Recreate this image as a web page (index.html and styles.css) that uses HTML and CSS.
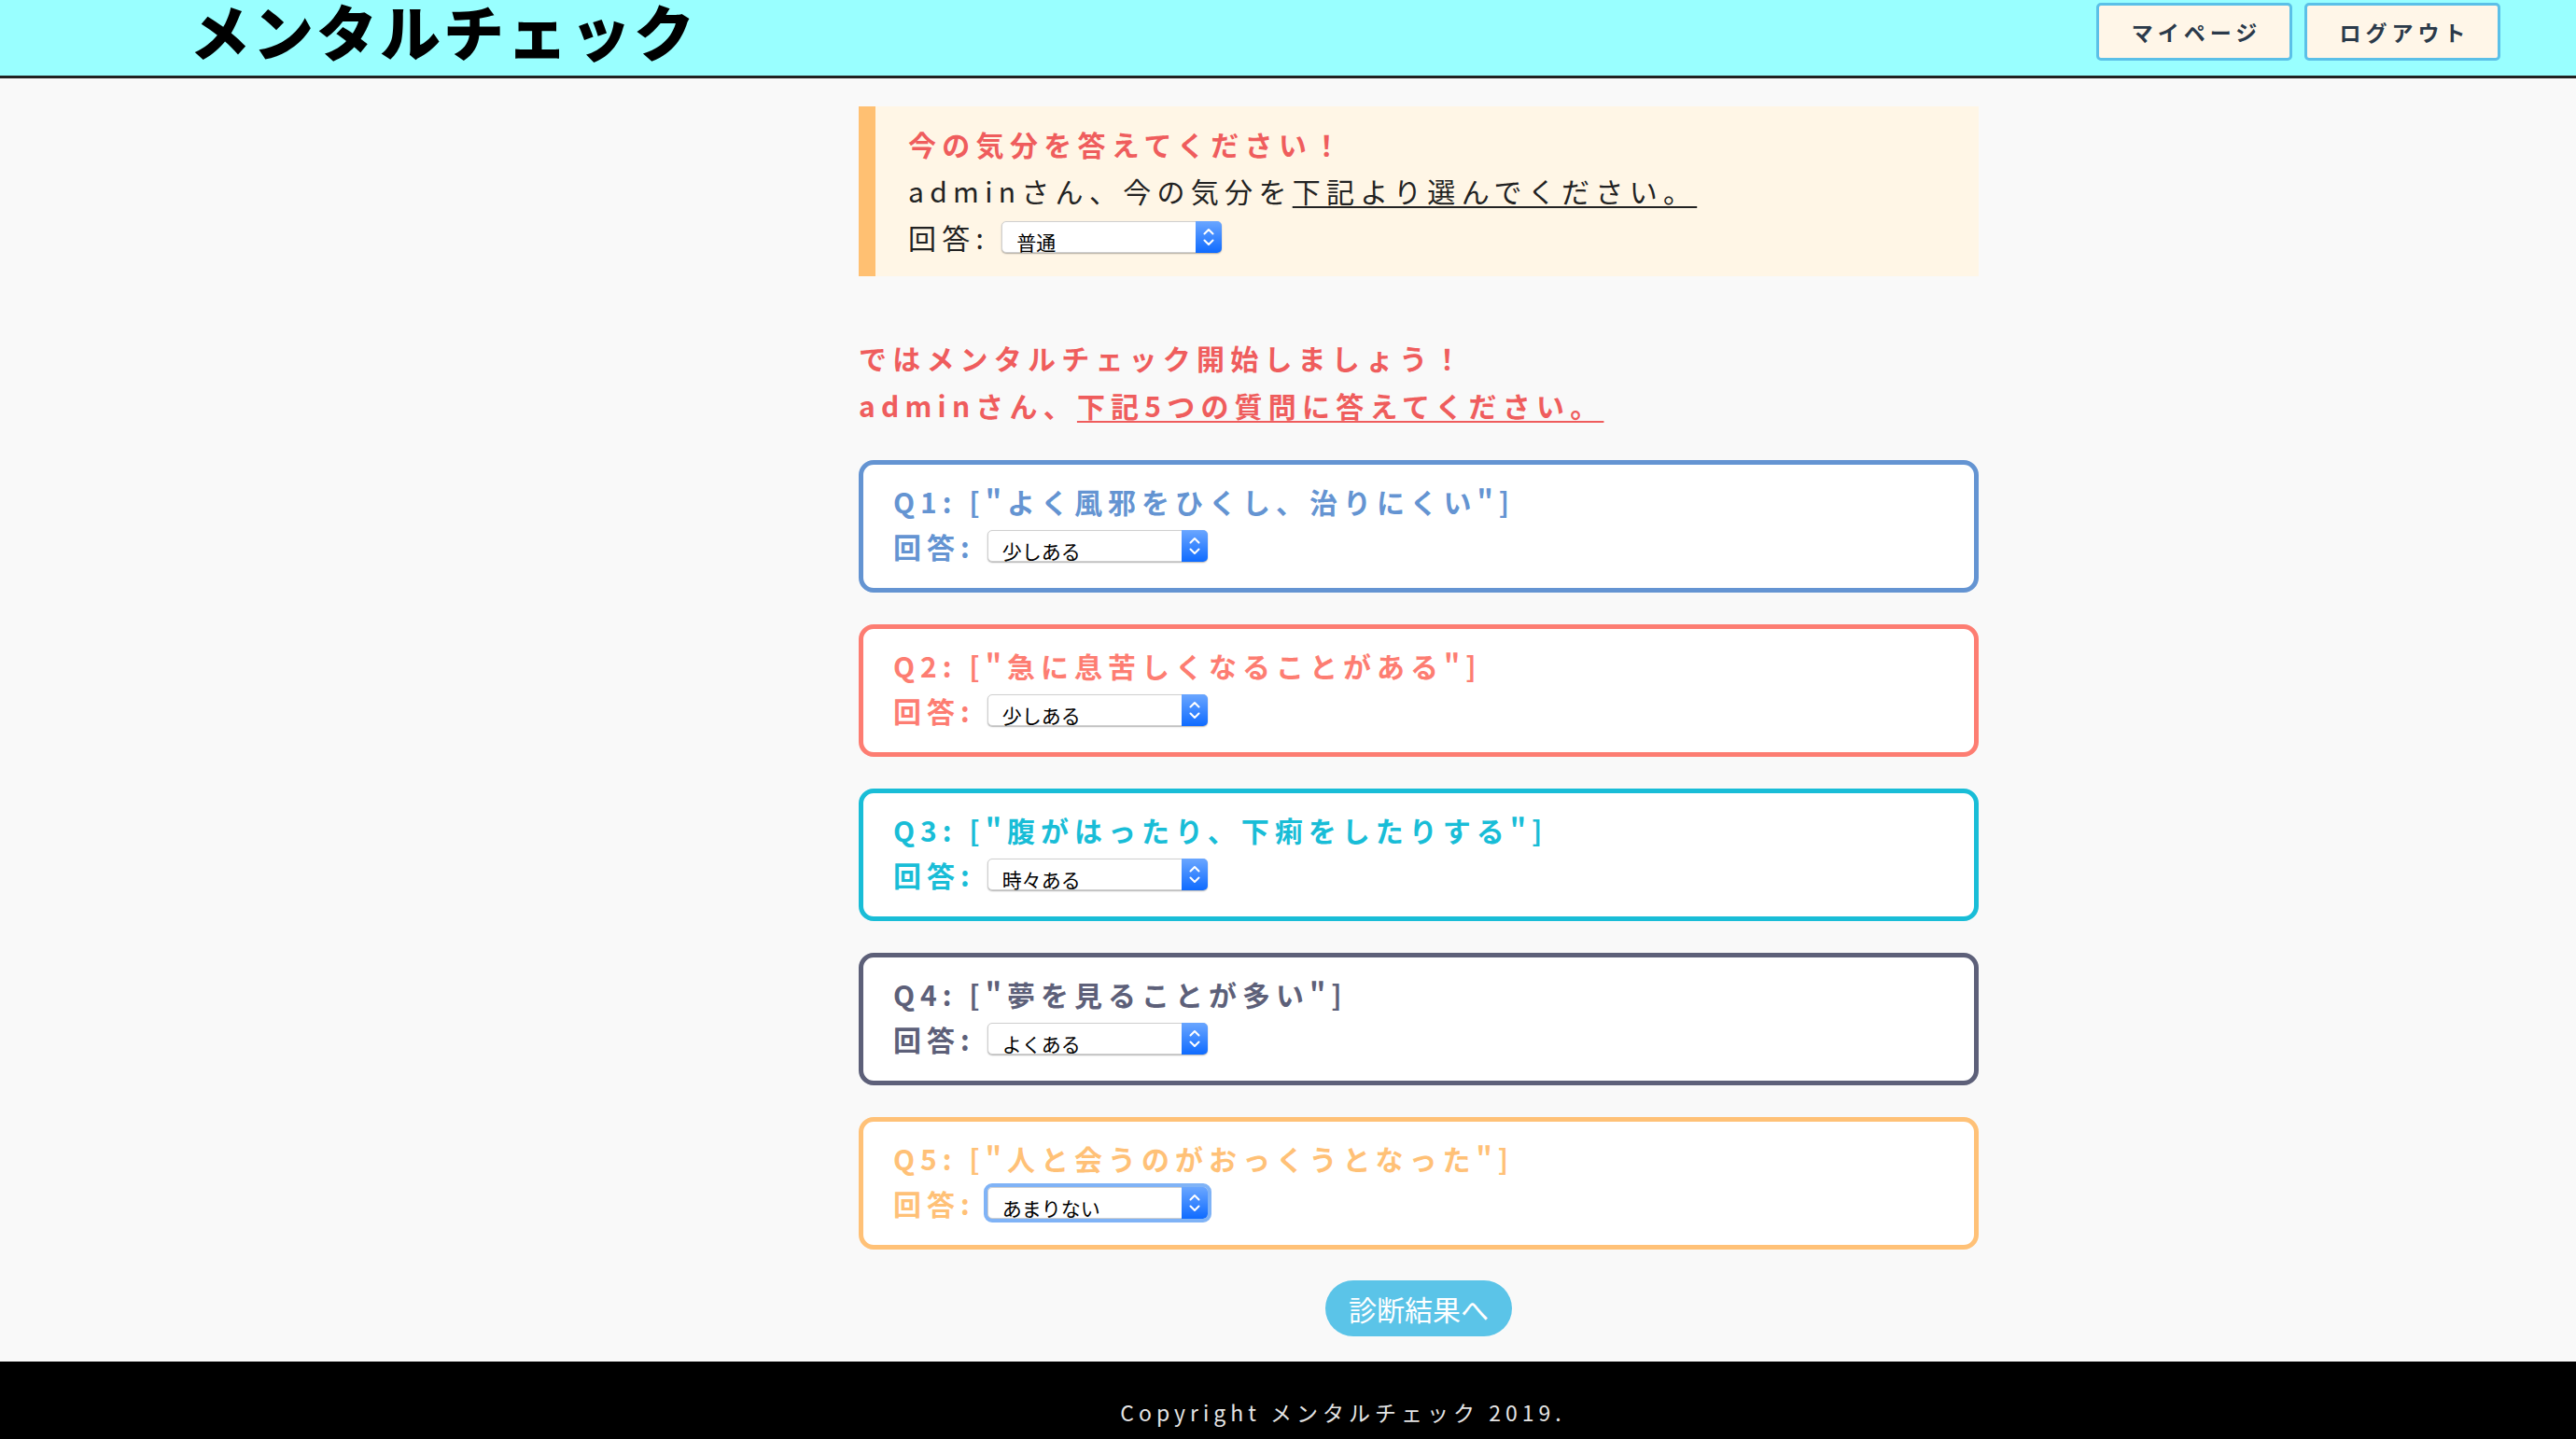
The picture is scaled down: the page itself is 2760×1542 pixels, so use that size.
FILE: index.html
```html
<!DOCTYPE html>
<html lang="ja">
<head>
<meta charset="utf-8">
<title>メンタルチェック</title>
<link rel="stylesheet" href="styles.css">
</head>
<body>
<header class="site-header">
  <div class="logo">メンタルチェック</div>
  <nav class="header-nav">
    <a class="nav-btn" href="#">マイページ</a>
    <a class="nav-btn" href="#">ログアウト</a>
  </nav>
</header>

<main class="content">
  <section class="notice">
    <p class="notice-title">今の気分を答えてください！</p>
    <p class="notice-text">adminさん、今の気分を<u>下記より選んでください。</u></p>
    <div class="answer-row notice-answer">
      <span class="answer-label">回答:</span>
      <div class="select">
        <span class="select-value">普通</span>
        <span class="select-arrow"><svg width="28" height="34" viewBox="0 0 28 34"><path d="M9.5 13.5 L14 9 L18.5 13.5 M9.5 20.5 L14 25 L18.5 20.5" fill="none" stroke="#fff" stroke-width="2" stroke-linecap="round" stroke-linejoin="round"/></svg></span>
      </div>
    </div>
  </section>

  <h2 class="intro">ではメンタルチェック開始しましょう！<br>adminさん、<u>下記5つの質問に答えてください。</u></h2>

  <section class="card q1">
    <p class="q-title">Q1: ["よく風邪をひくし、治りにくい"]</p>
    <div class="answer-row">
      <span class="answer-label">回答:</span>
      <div class="select">
        <span class="select-value">少しある</span>
        <span class="select-arrow"><svg width="28" height="34" viewBox="0 0 28 34"><path d="M9.5 13.5 L14 9 L18.5 13.5 M9.5 20.5 L14 25 L18.5 20.5" fill="none" stroke="#fff" stroke-width="2" stroke-linecap="round" stroke-linejoin="round"/></svg></span>
      </div>
    </div>
  </section>

  <section class="card q2">
    <p class="q-title">Q2: ["急に息苦しくなることがある"]</p>
    <div class="answer-row">
      <span class="answer-label">回答:</span>
      <div class="select">
        <span class="select-value">少しある</span>
        <span class="select-arrow"><svg width="28" height="34" viewBox="0 0 28 34"><path d="M9.5 13.5 L14 9 L18.5 13.5 M9.5 20.5 L14 25 L18.5 20.5" fill="none" stroke="#fff" stroke-width="2" stroke-linecap="round" stroke-linejoin="round"/></svg></span>
      </div>
    </div>
  </section>

  <section class="card q3">
    <p class="q-title">Q3: ["腹がはったり、下痢をしたりする"]</p>
    <div class="answer-row">
      <span class="answer-label">回答:</span>
      <div class="select">
        <span class="select-value">時々ある</span>
        <span class="select-arrow"><svg width="28" height="34" viewBox="0 0 28 34"><path d="M9.5 13.5 L14 9 L18.5 13.5 M9.5 20.5 L14 25 L18.5 20.5" fill="none" stroke="#fff" stroke-width="2" stroke-linecap="round" stroke-linejoin="round"/></svg></span>
      </div>
    </div>
  </section>

  <section class="card q4">
    <p class="q-title">Q4: ["夢を見ることが多い"]</p>
    <div class="answer-row">
      <span class="answer-label">回答:</span>
      <div class="select">
        <span class="select-value">よくある</span>
        <span class="select-arrow"><svg width="28" height="34" viewBox="0 0 28 34"><path d="M9.5 13.5 L14 9 L18.5 13.5 M9.5 20.5 L14 25 L18.5 20.5" fill="none" stroke="#fff" stroke-width="2" stroke-linecap="round" stroke-linejoin="round"/></svg></span>
      </div>
    </div>
  </section>

  <section class="card q5">
    <p class="q-title">Q5: ["人と会うのがおっくうとなった"]</p>
    <div class="answer-row">
      <span class="answer-label">回答:</span>
      <div class="select is-focused">
        <span class="select-value">あまりない</span>
        <span class="select-arrow"><svg width="28" height="34" viewBox="0 0 28 34"><path d="M9.5 13.5 L14 9 L18.5 13.5 M9.5 20.5 L14 25 L18.5 20.5" fill="none" stroke="#fff" stroke-width="2" stroke-linecap="round" stroke-linejoin="round"/></svg></span>
      </div>
    </div>
  </section>

  <div class="submit-wrap">
    <button class="submit-btn" type="button">診断結果へ</button>
  </div>
</main>

<footer class="site-footer">
  <p>Copyright メンタルチェック 2019.</p>
</footer>
</body>
</html>
```

FILE: styles.css
```css
* {
  box-sizing: border-box;
}

html, body {
  margin: 0;
  padding: 0;
}

body {
  background: #f9f9f9;
  font-family: "Noto Sans CJK JP", "Noto Sans", sans-serif;
  color: #222;
}

p {
  margin: 0;
}

/* Header */
.site-header {
  height: 84px;
  background: #99ffff;
  border-bottom: 3px solid #222;
  display: flex;
  justify-content: space-between;
  align-items: flex-start;
  padding: 0 81px 0 203px;
}

.logo {
  font-size: 65px;
  font-weight: 900;
  line-height: 81px;
  margin-top: -8px;
  letter-spacing: 3px;
  color: #000;
}

.header-nav {
  display: flex;
  gap: 13px;
  padding-top: 3px;
}

.nav-btn {
  width: 210px;
  height: 62px;
  display: flex;
  align-items: center;
  justify-content: center;
  background: #fff6e8;
  border: 3px solid #5bc0e8;
  border-radius: 5px;
  color: #2b3a4a;
  font-size: 23px;
  font-weight: 700;
  letter-spacing: 5px;
  text-decoration: none;
  padding-left: 5px;
}

/* Main column */
.content {
  width: 1200px;
  margin-left: 920px;
  padding-top: 30px;
}

.notice {
  background: #fff6e6;
  border-left: 18px solid #ffc072;
  padding: 15px 20px 17px 35px;
  font-size: 30px;
  line-height: 50px;
  letter-spacing: 6.3px;
}

.notice-title {
  color: #ef5d5d;
  font-weight: 700;
}

.notice-text {
  font-weight: 400;
  color: #222;
}

.notice-text u,
.intro u {
  text-decoration-thickness: 2px;
  text-underline-offset: 4px;
}

.answer-row {
  display: flex;
  align-items: center;
  height: 48px;
}

.notice-answer {
  height: 50px;
}

.answer-label {
  margin-right: 13px;
}

.intro {
  margin: 62px 0 0 0;
  font-size: 30px;
  line-height: 51px;
  letter-spacing: 6.2px;
  font-weight: 700;
  color: #ef5d5d;
}

/* Question cards */
.card {
  margin-top: 33px;
  height: 142px;
  background: #fff;
  border: 5px solid;
  border-radius: 16px;
  padding: 15px 32px 0 32px;
  font-size: 30px;
  line-height: 48px;
  letter-spacing: 6px;
  font-weight: 700;
}

.card + .card {
  margin-top: 34px;
}

.q1 { border-color: #6494d2; color: #6494d2; }
.q2 { border-color: #fd7d72; color: #fd7d72; }
.q3 { border-color: #19bdd7; color: #19bdd7; }
.q4 { border-color: #5d6079; color: #5d6079; }
.q5 { border-color: #ffc177; color: #ffc177; }

/* Select imitation */
.select {
  width: 236px;
  height: 34px;
  display: flex;
  background: #fff;
  border: 1px solid #cfcfcf;
  border-radius: 5px;
  box-shadow: 0 1px 1.5px rgba(0, 0, 0, 0.3);
  letter-spacing: 0;
}

.select.is-focused {
  outline: 4px solid #80b3f6;
  outline-offset: 0;
}

.select-value {
  flex: 1;
  padding: 10px 0 0 15px;
  font-size: 21px;
  line-height: 22px;
  font-weight: 400;
  color: #000;
  white-space: nowrap;
}

.select-arrow {
  width: 28px;
  display: flex;
  align-items: center;
  justify-content: center;
  margin: -1px -1px -1px 0;
  border-radius: 0 5px 5px 0;
  background: linear-gradient(#6aa6ff, #0f6bff);
}

/* Submit */
.submit-wrap {
  display: flex;
  justify-content: center;
  margin-top: 33px;
}

.submit-btn {
  width: 200px;
  height: 60px;
  border: none;
  border-radius: 30px;
  background: #5bc4e8;
  color: #fff;
  font-family: "Noto Sans CJK JP", sans-serif;
  font-size: 30px;
  font-weight: 400;
  padding: 0;
}

/* Footer */
.site-footer {
  margin-top: 27px;
  height: 83px;
  background: #000;
  color: #e4e4e4;
  text-align: center;
  padding-left: 118px;
  padding-top: 38px;
  font-size: 23px;
  line-height: 32px;
  letter-spacing: 5px;
}
```
